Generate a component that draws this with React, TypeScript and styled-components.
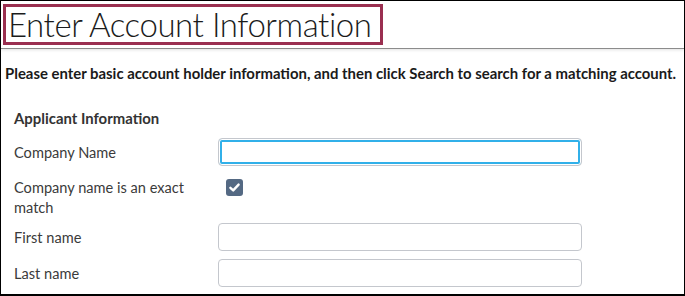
import React from "react";
import styled, { createGlobalStyle } from "styled-components";

const GlobalStyle = createGlobalStyle`
  html, body {
    margin: 0;
    padding: 0;
    background: #ffffff;
  }
  body {
    font-family: "Lato", "Liberation Sans", sans-serif;
    color: #333333;
  }
  * {
    box-sizing: border-box;
  }
`;

const Frame = styled.div`
  width: 685px;
  height: 296px;
  overflow: hidden;
  border-style: solid;
  border-color: #000000;
  border-width: 1px 1px 2px 1px;
  background: #ffffff;
`;

const Header = styled.div`
  padding: 3px 2px 3px 2px;
  border-bottom: 1px solid #8c8c8c;
  box-shadow: 0 1px 3px rgba(0, 0, 0, 0.12);
`;

const TitleBox = styled.div`
  display: inline-flex;
  align-items: center;
  width: 380px;
  height: 41px;
  border: 3px solid #9a2f50;
  padding-left: 2px;
`;

const Title = styled.h1`
  margin: 0;
  font-family: "Lato", sans-serif;
  font-weight: 300;
  font-size: 33px;
  letter-spacing: -0.45px;
  line-height: 35px;
  color: #1b1b1b;
  white-space: nowrap;
`;

const Intro = styled.p`
  margin: 14px 0 0 0;
  padding-left: 4px;
  font-weight: 700;
  font-size: 14.9px;
  line-height: 20px;
  color: #1a1a1a;
  white-space: nowrap;
`;

const Section = styled.div`
  padding-left: 13px;
  margin-top: 25px;
`;

const SectionTitle = styled.h2`
  margin: 0;
  font-weight: 700;
  font-size: 14.9px;
  line-height: 20px;
  color: #333333;
`;

const Form = styled.div`
  display: flex;
  flex-direction: column;
  gap: 8px;
  margin-top: 10px;
`;

const Row = styled.div<{ $align?: "center" | "flex-start"; $height?: number }>`
  display: flex;
  align-items: ${(p) => p.$align ?? "center"};
  ${(p) => (p.$height ? `height: ${p.$height}px;` : "")}
`;

const Label = styled.label<{ $padTop?: number; $lineHeight?: number }>`
  width: 204px;
  flex: none;
  padding-top: ${(p) => p.$padTop ?? 0}px;
  padding-right: 16px;
  font-size: 14.6px;
  line-height: ${(p) => p.$lineHeight ?? 19}px;
  color: #3b3b3b;
`;

const Input = styled.input<{ $focused?: boolean }>`
  width: 364px;
  height: 28px;
  margin: 0;
  padding: 0 8px;
  border: 1px solid #c4c7cd;
  border-radius: 4px;
  background: #ffffff;
  font-family: "Lato", sans-serif;
  font-size: 14px;
  outline: none;
  box-shadow: ${(p) => (p.$focused ? "inset 0 0 0 1px #ffffff, inset 0 0 0 3px #31b0e9" : "none")};
`;

const CheckBox = styled.span`
  display: inline-flex;
  align-items: center;
  justify-content: center;
  width: 17px;
  height: 17px;
  margin: 5px 0 0 8px;
  border-radius: 3px;
  background: #546983;
`;

const CheckIcon = () => (
  <svg width="13" height="13" viewBox="0 0 13 13" aria-hidden="true">
    <path d="M2.4 6.8 L5.2 9.4 L10.6 3.6" fill="none" stroke="#ffffff" strokeWidth="2.4" strokeLinecap="round" strokeLinejoin="round" />
  </svg>
);

export default function App() {
  return (
    <>
      <GlobalStyle />
      <Frame>
        <Header>
          <TitleBox>
            <Title>Enter Account Information</Title>
          </TitleBox>
        </Header>
        <Intro>
          Please enter basic account holder information, and then click Search to search for a matching account.
        </Intro>
        <Section>
          <SectionTitle>Applicant Information</SectionTitle>
          <Form>
            <Row>
              <Label>Company Name</Label>
              <Input $focused aria-label="Company Name" />
            </Row>
            <Row $align="flex-start" $height={41}>
              <Label $padTop={3.5} $lineHeight={20}>
                Company name is an exact match
              </Label>
              <CheckBox role="checkbox" aria-checked="true">
                <CheckIcon />
              </CheckBox>
            </Row>
            <Row>
              <Label>First name</Label>
              <Input aria-label="First name" />
            </Row>
            <Row>
              <Label>Last name</Label>
              <Input aria-label="Last name" />
            </Row>
          </Form>
        </Section>
      </Frame>
    </>
  );
}
